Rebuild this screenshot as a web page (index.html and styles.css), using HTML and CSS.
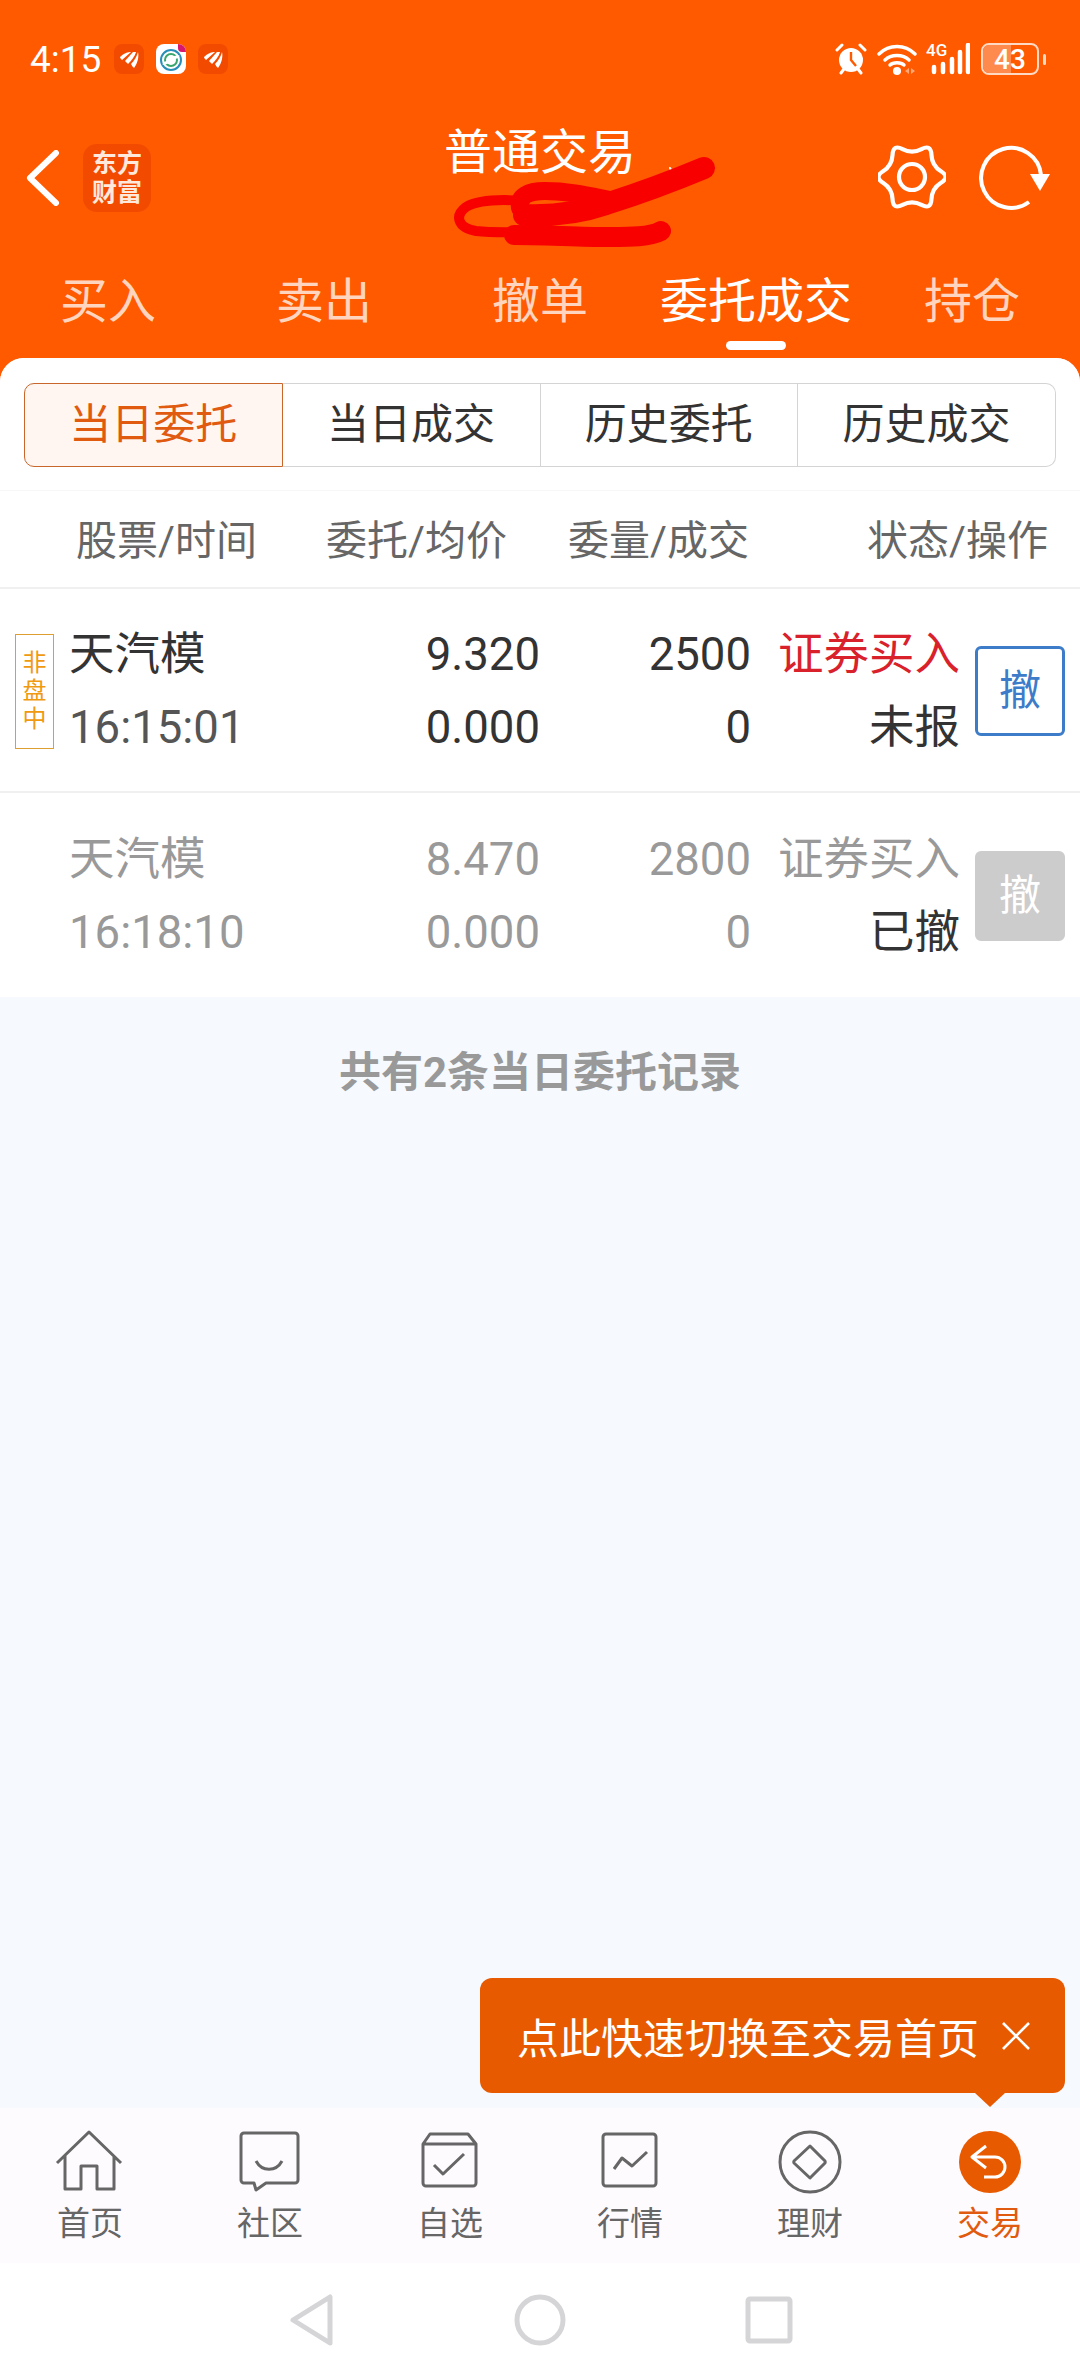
FILE: index.html
```html
<!DOCTYPE html>
<html lang="zh-CN">
<head>
    <meta charset="UTF-8">
    <meta name="viewport" content="width=device-width, initial-scale=1.0">
    <title>普通交易</title>
    <link rel="stylesheet" href="styles.css">
</head>
<body>
<div class="app">
    <svg width="0" height="0" class="defs">
        <symbol id="fan" viewBox="0 0 30 30">
            <path d="M6 13C10 9 14 8 17 8L8 16C7 15 6 14 6 13Z" fill="#fff"/>
            <path d="M11 17L19 8C20 8 21 8 22 8C21 12 17 17 14 20C13 19 12 18 11 17Z" fill="#fff"/>
            <path d="M17 20C20 17 23 12 24 8C25 12 24 19 20 24C19 23 18 22 17 20Z" fill="#fff"/>
        </symbol>
    </svg>

    <header class="top">
        <div class="statusbar">
            <span class="clock">4:15</span>
            <svg class="appicon" width="30" height="30"><use href="#fan"/></svg>
            <svg class="appicon appicon-white" width="30" height="30" viewBox="0 0 30 30">
                <circle cx="15" cy="16" r="10" fill="none" stroke="#2a8fb8" stroke-width="2"/>
                <circle cx="15" cy="16" r="6" fill="none" stroke="#3aa56c" stroke-width="2"/>
                <path d="M7 19C12 21 18 11 23 13" fill="none" stroke="#fff" stroke-width="3"/>
                <path d="M22 0H30V8H26A4 4 0 0 1 22 4Z" fill="#d6186f"/>
            </svg>
            <svg class="appicon" width="30" height="30"><use href="#fan"/></svg>
            <div class="status-right">
                <svg width="32" height="32" viewBox="0 0 32 32">
                    <circle cx="16" cy="17" r="12" fill="#fff"/>
                    <path d="M16 9V17L21 23" fill="none" stroke="#ff5a00" stroke-width="2.4"/>
                    <path d="M2 7L7 2M30 7L25 2M6 30L9 26M26 30L23 26" stroke="#fff" stroke-width="3" stroke-linecap="round"/>
                </svg>
                <svg class="wifi" width="40" height="32" viewBox="0 0 40 32">
                    <path d="M2 11C12 1 28 1 38 11M8 17C14 11 26 11 32 17" fill="none" stroke="#fff" stroke-width="3.4" stroke-linecap="round"/>
                    <path d="M13 22C16 19 24 19 27 22" fill="none" stroke="#fff" stroke-width="3.4" stroke-linecap="round"/>
                    <circle cx="20" cy="28" r="4" fill="#fff"/>
                    <path d="M28 28L32 25V31ZM38 28L34 25V31Z" fill="#ffa877"/>
                </svg>
                <div class="signal">
                    <span class="signal-label">4G</span>
                    <svg width="42" height="32" viewBox="0 0 42 32">
                        <path d="M6 24V29M15 21V29M24 16V29M32 9V29M40 2V29" stroke="#fff" stroke-width="4.5" stroke-linecap="round"/>
                    </svg>
                </div>
                <div class="battery"><span class="battery-fill"></span><span class="battery-num">43</span></div>
                <span class="battery-tip"></span>
            </div>
        </div>

        <div class="toolbar">
            <div class="toolbar-left">
                <svg width="34" height="56" viewBox="0 0 34 56">
                    <path d="M30 3L4 28L30 53" fill="none" stroke="#fff" stroke-width="6" stroke-linecap="round" stroke-linejoin="round"/>
                </svg>
                <div class="brand">东方<br>财富</div>
            </div>
            <div class="title">普通交易</div>
            <div class="toolbar-right">
                <svg width="68" height="68" viewBox="0 0 68 68">
                    <path d="M62.96 38.75Q72 33 62.96 27.25Q53.92 21.5 53.46 10.8Q53 .1 43.5 5.05Q34 10 24.5 5.05Q15 .1 14.54 10.8Q14.08 21.5 5.04 27.25Q-4 33 5.04 38.75Q14.08 44.5 14.54 55.2Q15 65.9 24.5 60.95Q34 56 43.5 60.95Q53 65.9 53.46 55.2Q53.92 44.5 62.96 38.75Z" fill="none" stroke="#fff" stroke-width="4.2"/>
                    <circle cx="34" cy="33" r="13" fill="none" stroke="#fff" stroke-width="4.2"/>
                </svg>
                <svg width="72" height="68" viewBox="0 0 72 68">
                    <path d="M62 31A30 30 0 1 0 50 58" fill="none" stroke="#fff" stroke-width="4"/>
                    <path d="M51 30H71L61 47Z" fill="#fff"/>
                </svg>
            </div>
        </div>

        <nav class="tabs">
            <div class="tab">买入</div>
            <div class="tab">卖出</div>
            <div class="tab">撤单</div>
            <div class="tab tab-active">委托成交</div>
            <div class="tab">持仓</div>
        </nav>
    </header>

    <main class="main">
        <div class="panel">
            <div class="segments">
                <div class="segment segment-active">当日委托</div>
                <div class="segment">当日成交</div>
                <div class="segment">历史委托</div>
                <div class="segment">历史成交</div>
            </div>

            <div class="list-head">
                <span class="head-name">股票/时间</span>
                <span class="head-price">委托/均价</span>
                <span class="head-qty">委量/成交</span>
                <span class="head-state">状态/操作</span>
            </div>

            <div class="order">
                <div class="order-tag"><span>非</span><span>盘</span><span>中</span></div>
                <div class="cell-name">天汽模</div>
                <div class="cell-num">9.320</div>
                <div class="cell-num">2500</div>
                <div class="cell-num buy">证券买入</div>
                <div class="cancel">撤</div>
                <div class="cell-time">16:15:01</div>
                <div class="cell-num">0.000</div>
                <div class="cell-num">0</div>
                <div class="cell-num">未报</div>
            </div>

            <div class="order order-done">
                <div class="cell-name">天汽模</div>
                <div class="cell-num">8.470</div>
                <div class="cell-num">2800</div>
                <div class="cell-num">证券买入</div>
                <div class="cancel cancel-off">撤</div>
                <div class="cell-time">16:18:10</div>
                <div class="cell-num">0.000</div>
                <div class="cell-num">0</div>
                <div class="cell-num cell-dark">已撤</div>
            </div>
        </div>
        <p class="summary">共有2条当日委托记录</p>
    </main>

    <nav class="bottomnav">
        <div class="navitem">
            <svg width="72" height="64" viewBox="0 0 72 64"><path d="M3 33L35 2L67 33M11 26V59H27V36H43V59H60V26" /></svg>
            <span>首页</span>
        </div>
        <div class="navitem">
            <svg width="72" height="64" viewBox="0 0 72 64"><path d="M10 3H61A3 3 0 0 1 64 6V50A3 3 0 0 1 61 53H32L22 60L20 53H10A3 3 0 0 1 7 50V6A3 3 0 0 1 10 3Z"/><path d="M22 31C28 42 42 42 48 31"/></svg>
            <span>社区</span>
        </div>
        <div class="navitem">
            <svg width="72" height="64" viewBox="0 0 72 64"><path d="M16 4H54L62 14V53A3 3 0 0 1 59 56H12A3 3 0 0 1 9 53V14ZM9 14H62"/><path d="M20 35L29 44L50 24"/></svg>
            <span>自选</span>
        </div>
        <div class="navitem">
            <svg width="72" height="64" viewBox="0 0 72 64"><path d="M12 4H59A3 3 0 0 1 62 7V53A3 3 0 0 1 59 56H12A3 3 0 0 1 9 53V7A3 3 0 0 1 12 4Z"/><path d="M20 39L28 28L38 36L53 22"/></svg>
            <span>行情</span>
        </div>
        <div class="navitem">
            <svg width="72" height="64" viewBox="0 0 72 64"><circle cx="36" cy="32" r="30"/><path d="M36 16L51 31A2 2 0 0 1 51 33L36 48L20 33A2 2 0 0 1 20 31Z"/></svg>
            <span>理财</span>
        </div>
        <div class="navitem navitem-active">
            <svg width="72" height="64" viewBox="0 0 72 64"><circle class="solid" cx="36" cy="32" r="31"/><path class="back" d="M32 16L18 27L32 38M18 27H41A10 10 0 0 1 41 47H30"/></svg>
            <span>交易</span>
        </div>
    </nav>

    <div class="sysbar">
        <svg width="46" height="54" viewBox="0 0 46 54"><path d="M41 4V50L4 27Z"/></svg>
        <svg width="54" height="54" viewBox="0 0 54 54"><circle cx="27" cy="27" r="23"/></svg>
        <svg width="48" height="48" viewBox="0 0 48 48"><rect x="3" y="3" width="42" height="42" rx="2"/></svg>
    </div>

    <!-- hand scribble over the account name -->
    <svg class="scribble" width="1080" height="358" viewBox="0 0 1080 358">
        <path d="M670 168L674 176" stroke="#fff" stroke-width="2" fill="none"/>
        <path d="M704 168C680 178 650 190 606 204C580 213 550 216 524 215" stroke-width="22"/>
        <path d="M520 208C518 196 528 191 545 191C570 191 590 196 610 200" stroke-width="18"/>
        <path d="M525 201C500 199 478 200 466 207C454 216 458 228 476 231C495 233 510 232 528 232" stroke-width="10"/>
        <path d="M514 235C550 235 585 237 610 237C630 237 650 237 661 231" stroke-width="20"/>
    </svg>

    <div class="tip">
        <span>点此快速切换至交易首页</span>
        <svg width="30" height="30" viewBox="0 0 30 30"><path d="M2 2L28 28M28 2L2 28" stroke="#fff" stroke-width="2.6"/></svg>
    </div>
</div>
</body>
</html>
```

FILE: styles.css
```css
* {
    box-sizing: border-box;
}
body {
    margin: 0;
    font-family: Roboto, "Noto Sans CJK SC", sans-serif;
    color: #333;
}
.defs {
    position: absolute;
}
.app {
    position: relative;
    display: flex;
    flex-direction: column;
    width: 1080px;
    height: 2376px;
    overflow: hidden;
    background: #ff5a00;
}

/* top orange area */
.statusbar {
    display: flex;
    align-items: center;
    height: 90px;
    padding: 28px 34px 0 30px;
    color: #fff;
}
.clock {
    width: 84px;
    font-size: 37px;
}
.appicon {
    margin-right: 12px;
    border-radius: 8px;
    background: #f24b00;
}
.appicon-white {
    background: #fff;
}
.status-right {
    display: flex;
    align-items: center;
    margin-left: auto;
}
.wifi {
    margin-left: 10px;
}
.signal {
    position: relative;
    width: 44px;
    height: 32px;
    margin-left: 9px;
    display: flex;
    justify-content: flex-end;
}
.signal-label {
    position: absolute;
    left: 0;
    top: -3px;
    font-size: 17px;
    font-weight: 500;
}
.battery {
    position: relative;
    width: 58px;
    height: 32px;
    margin-left: 11px;
    border: 2px solid #ffd9c4;
    border-radius: 8px;
    overflow: hidden;
    display: flex;
    align-items: center;
    justify-content: center;
}
.battery-fill {
    position: absolute;
    left: 0;
    top: 0;
    bottom: 0;
    width: 28px;
    background: #ff8a4d;
}
.battery-num {
    position: relative;
    font-size: 28px;
    font-weight: 500;
}
.battery-tip {
    width: 3px;
    height: 11px;
    margin-left: 4px;
    border-radius: 2px;
    background: #ffd9c4;
}
.toolbar {
    display: grid;
    grid-template-columns: 1fr auto 1fr;
    height: 177px;
    color: #fff;
}
.toolbar-left {
    display: flex;
    align-items: center;
    gap: 23px;
    height: 68px;
    margin-top: 54px;
    padding-left: 26px;
}
.brand {
    width: 68px;
    height: 68px;
    border-radius: 14px;
    background: #f24b00;
    font-size: 25px;
    font-weight: 700;
    line-height: 29px;
    padding-top: 5px;
    text-align: center;
    color: #ffe9dc;
}
.title {
    margin-top: 33px;
    font-size: 48px;
    line-height: 60px;
}
.toolbar-right {
    display: flex;
    justify-content: flex-end;
    gap: 33px;
    margin-top: 54px;
    padding-right: 29px;
}
.tabs {
    display: flex;
    height: 91px;
}
.tab {
    position: relative;
    flex: 1;
    text-align: center;
    font-size: 48px;
    line-height: 70px;
    color: rgba(255, 255, 255, 0.75);
}
.tab-active {
    color: #fff;
}
.tab-active:after {
    content: "";
    position: absolute;
    left: 50%;
    bottom: 8px;
    width: 60px;
    height: 9px;
    margin-left: -30px;
    border-radius: 5px;
    background: #fff;
}

/* order list */
.main {
    flex: 1;
    border-radius: 24px 24px 0 0;
    overflow: hidden;
    background: #f6faff;
}
.panel {
    background: #fff;
}
.segments {
    display: flex;
    height: 132px;
    padding: 25px 24px 0;
}
.segment {
    flex: 1;
    height: 84px;
    border: 1px solid #d4d4d4;
    border-left: none;
    font-size: 42px;
    line-height: 82px;
    text-align: center;
    color: #333;
}
.segment:last-child {
    border-radius: 0 10px 10px 0;
}
.segment-active {
    border: 1px solid #c8662c;
    border-radius: 10px 0 0 10px;
    background: #fff6f2;
    color: #e05a10;
}
.list-head {
    display: grid;
    grid-template-columns: 326px 214px 209px 331px;
    align-items: center;
    height: 99px;
    padding-bottom: 5px;
    border-top: 1px solid #f7f7f7;
    border-bottom: 2px solid #f0f0f0;
    font-size: 41px;
    white-space: nowrap;
    color: #666;
}
.head-name {
    padding-left: 76px;
}
.head-qty {
    text-align: right;
}
.head-state {
    padding-right: 32px;
    text-align: right;
}
.order {
    display: grid;
    grid-template-columns: 69px 271px 200px 211px 209px 120px;
    grid-template-rows: 73px 73px;
    align-content: center;
    height: 204px;
    padding-top: 2px;
    border-bottom: 2px solid #f0f0f0;
    font-size: 45.5px;
    line-height: 73px;
    white-space: nowrap;
}
.order:last-child {
    border-bottom: none;
}
.order-tag {
    grid-row: 1 / 3;
    grid-column: 1;
    align-self: center;
    display: flex;
    flex-direction: column;
    align-items: center;
    justify-content: center;
    width: 39px;
    height: 115px;
    margin-left: 15px;
    border: 1px solid #dd9f30;
    font-size: 24px;
    line-height: 28px;
    color: #f09a10;
}
.cell-name {
    grid-column: 2;
}
.cell-time {
    grid-column: 2;
    color: #555;
}
.cell-num {
    text-align: right;
}
.buy {
    color: #d9212c;
}
.cancel {
    grid-row: 1 / 3;
    grid-column: 6;
    align-self: center;
    justify-self: end;
    width: 90px;
    height: 90px;
    margin-right: 15px;
    border: 3px solid #3d7cc9;
    border-radius: 6px;
    font-size: 42px;
    line-height: 84px;
    text-align: center;
    color: #3d7cc9;
}
.cancel-off {
    border-color: #ccc;
    background: #ccc;
    color: #fff;
}
.order-done,
.order-done .cell-time {
    color: #999;
}
.order-done .cell-dark {
    color: #333;
}
.summary {
    margin: 46px 0 0;
    text-align: center;
    font-size: 42px;
    font-weight: 700;
    line-height: 60px;
    color: #999;
}

/* bottom bars */
.bottomnav {
    display: flex;
    height: 155px;
    padding-top: 22px;
    background: #fefbfe;
}
.navitem {
    flex: 1;
    display: flex;
    flex-direction: column;
    align-items: center;
    font-size: 33px;
    line-height: 42px;
    color: #666;
}
.navitem span {
    margin-top: 9px;
}
.navitem svg {
    fill: none;
    stroke: #666;
    stroke-width: 3;
    stroke-linejoin: round;
}
.navitem-active {
    color: #e05a10;
}
.navitem-active .solid {
    fill: #e85a00;
    stroke: none;
}
.navitem-active .back {
    stroke: #fff;
    stroke-width: 3;
}
.sysbar {
    display: flex;
    align-items: center;
    justify-content: center;
    gap: 178px;
    height: 113px;
    padding-left: 2px;
    background: #fff;
}
.sysbar svg {
    fill: none;
    stroke: #d5d5d8;
    stroke-width: 5;
    stroke-linejoin: round;
}

/* overlays */
.scribble {
    position: absolute;
    left: 0;
    top: 0;
    fill: none;
    stroke: #f80000;
    stroke-linecap: round;
    stroke-linejoin: round;
}
.tip {
    position: absolute;
    right: 15px;
    bottom: 283px;
    display: flex;
    align-items: center;
    width: 585px;
    height: 115px;
    padding-left: 37px;
    border-radius: 12px;
    background: #e85a00;
    color: #fff;
    font-size: 42px;
}
.tip svg {
    margin-left: 22px;
}
.tip:after {
    content: "";
    position: absolute;
    right: 60px;
    bottom: -14px;
    border-top: 14px solid #e85a00;
    border-left: 15px solid transparent;
    border-right: 15px solid transparent;
}
```
